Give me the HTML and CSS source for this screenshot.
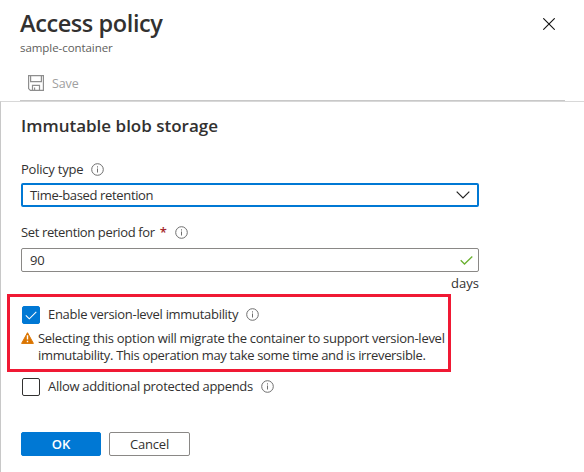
FILE: index.html
```html
<!DOCTYPE html>
<html lang="en">
<head>
<meta charset="utf-8">
<title>Access policy</title>
<link rel="stylesheet" href="styles.css">
</head>
<body>
<svg width="0" height="0" class="defs">
  <symbol id="info" viewBox="0 0 13 13"><circle cx="6.5" cy="6.5" r="5.8" fill="none" stroke="#6e6e6e"/><path d="M6.5 5.5v4M6.5 3.3v1.2" stroke="#6e6e6e" fill="none"/></symbol>
</svg>
<header class="header">
  <div class="top">
    <div>
      <h1 class="title">Access policy</h1>
      <div class="subtitle">sample-container</div>
    </div>
    <svg class="close" width="12" height="12" viewBox="0 0 12 12"><path d="M.3.3l11.4 11.4M11.7.3L.3 11.7" stroke="#111" stroke-width="1.1"/></svg>
  </div>
  <div class="toolbar">
    <svg width="16" height="16" viewBox="0 0 16 16" fill="none" stroke="#8e8e8e"><path d="M.6.6h14.800v14.800h-13l-1.800-1.800zM2.600.6v6h10.800v-6M4.500 15.400v-5h7v5M6.600 15.400v-3" stroke-width="1.200"/></svg>
    <span class="save">Save</span>
  </div>
</header>
<main class="panel">
  <h2 class="heading">Immutable blob storage</h2>
  <div class="label policy"><span class="t-policy">Policy type</span><svg class="info"><use href="#info"/></svg></div>
  <div class="field select"><span class="t-time">Time-based retention</span><svg width="14" height="8" viewBox="0 0 14 8"><path d="M.7.7L7 7 13.300.7" fill="none" stroke="#222" stroke-width="1.200"/></svg></div>
  <div class="label period"><span class="t-period">Set retention period for</span><span class="star">*</span><svg class="info"><use href="#info"/></svg></div>
  <div class="field number"><span class="t-num">90</span><svg width="13" height="9" viewBox="0 0 13 9"><path d="M.7 4.200L4.500 8 12.300.5" fill="none" stroke="#6bb131" stroke-width="1.300"/></svg></div>
  <div class="days">days</div>
  <section class="callout">
    <div class="option"><span class="box checked"><svg width="12" height="9" viewBox="0 0 12 9"><path d="M.8 4.300L4.300 7.800 11.300.8" fill="none" stroke="#fff" stroke-width="1.100"/></svg></span><span class="t-option">Enable version-level immutability</span><svg class="info"><use href="#info"/></svg></div>
    <div class="warning">
      <svg width="13" height="12" viewBox="0 0 13 12"><path d="M6.500.7L12.400 11.400H.6z" fill="#db7500" stroke="#db7500" stroke-linejoin="round"/><path d="M6.500 3.300v4.200M6.500 8.700v1.500" stroke="#fff" stroke-width="1.400"/></svg>
      <div><div class="t-w1">Selecting this option will migrate the container to support version-level</div><div class="t-w2">immutability. This operation may take some time and is irreversible.</div></div>
    </div>
  </section>
  <div class="option allow"><span class="box"></span><span class="t-option">Allow additional protected appends</span><svg class="info"><use href="#info"/></svg></div>
  <div class="actions"><button class="btn primary">OK</button><button class="btn cancel">Cancel</button></div>
</main>
</body>
</html>
```
FILE: styles.css
```css
* { box-sizing: border-box; }
body { margin: 0; width: 584px; height: 472px; overflow: hidden; background: #fff; color: #323130; font: 13px/17px "Open Sans", "Noto Sans", sans-serif; white-space: nowrap; display: flex; flex-direction: column; }
svg { display: block; flex: none; }
.defs { position: absolute; }
h1, h2 { margin: 0; font-weight: 600; }
.header { height: 101px; margin: 0 19px 0 20px; border-bottom: 1px solid #c8c8c8; flex: none; }
.top { display: flex; justify-content: space-between; padding: 8px 10px 0 0; height: 68px; }
.close { margin-top: 10px; }
.title { font-size: 23.500px; line-height: 31px; letter-spacing: -.4px; }
.subtitle { font-size: 11.500px; line-height: 16px; color: #605e5c; margin-top: 1px; letter-spacing: -.06px; }
.toolbar { display: flex; align-items: center; gap: 8px; height: 30px; padding-left: 8px; color: #a0a0a0; }
.save { font-size: 12.500px; letter-spacing: -.1px; }
.panel { flex: 1; border-top: 1px solid #d8d8d8; border-left: 1px solid #c8c8c8; padding-left: 20px; }
.heading { font-size: 17px; line-height: 24px; margin-top: 12px; }
.label { display: flex; align-items: center; height: 18px; }
.info { width: 13px; height: 13px; }
.policy { margin-top: 22px; gap: 8px; }
.t-policy { letter-spacing: -.22px; }
.t-time { letter-spacing: -.35px; }
.t-period { letter-spacing: -.37px; }
.field { display: flex; align-items: center; justify-content: space-between; width: 458px; height: 24px; border-radius: 2px; }
.select { margin-top: 5px; border: 2px solid #0078d4; padding: 0 7px; }
.period { margin-top: 16px; }
.star { color: #a4262c; font-weight: 600; margin: 0 8px 0 5px; }
.number { margin-top: 7px; border: 1px solid #8a8886; padding: 0 5px 0 8px; }
.t-num { letter-spacing: -.3px; }
.days { width: 458px; text-align: right; margin-top: 3px; }
.callout { width: 444px; height: 78px; border: 3px solid #f01934; margin: 2px 0 0 -14px; padding: 9px 0 0 12px; }
.option { display: flex; align-items: center; gap: 8px; height: 18px; }
.option .info { margin-bottom: 1px; }
.t-option { letter-spacing: -.3px; margin-bottom: 2px; }
.box { width: 18px; height: 18px; border: 1px solid #323130; border-radius: 2px; display: flex; align-items: center; justify-content: center; }
.checked { background: #0078d4; border-color: #0078d4; }
.warning { display: flex; gap: 4px; margin: 6px 0 0 -1px; }
.warning > svg { margin-top: 2px; }
.t-w1 { letter-spacing: -.28px; }
.t-w2 { letter-spacing: -.34px; }
.allow { margin: 6px 0 0 1px; }
.actions { display: flex; gap: 8px; margin-top: 36px; }
.btn { width: 80px; height: 24px; padding: 0; font: 600 13px/20px "Open Sans", sans-serif; border: 1px solid #8a8886; border-radius: 2px; background: #fff; color: #323130; }
.primary { background: #0078d4; border-color: #0078d4; color: #fff; }
.cancel { width: 81px; font-weight: 400; letter-spacing: -.2px; }
```
